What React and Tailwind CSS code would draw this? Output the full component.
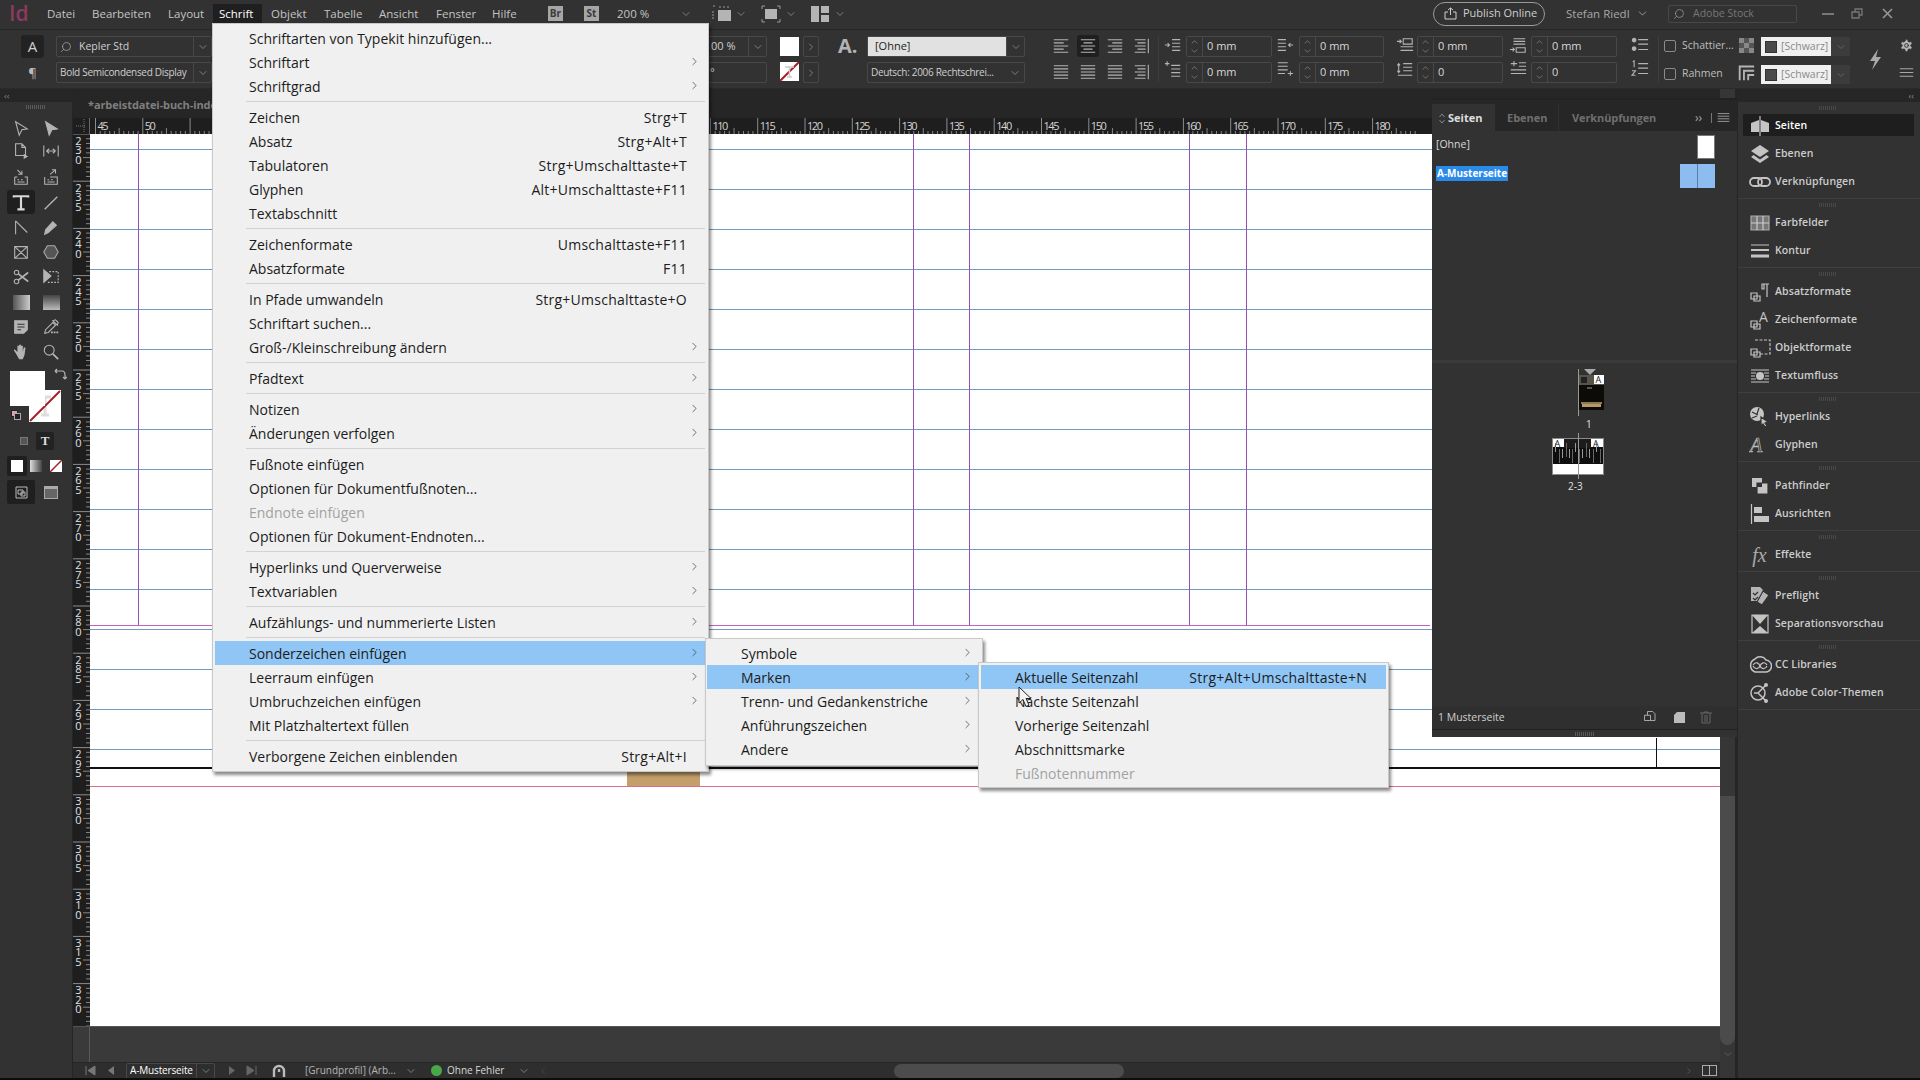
import { ChevronRight, ChevronDown, ChevronUp, ChevronLeft, Search, Settings } from 'lucide-react'

const MENU_BAR = [
  { t: 'Datei', w: 'w-[45px]' },
  { t: 'Bearbeiten', w: 'w-[76px]' },
  { t: 'Layout', w: 'w-[51px]' },
  { t: 'Schrift', w: 'w-[52px]', active: true },
  { t: 'Objekt', w: 'w-[53px]' },
  { t: 'Tabelle', w: 'w-[55px]' },
  { t: 'Ansicht', w: 'w-[57px]' },
  { t: 'Fenster', w: 'w-[56px]' },
  { t: 'Hilfe', w: 'w-[56px]' },
]

const SCHRIFT = [
  [{ t: 'Schriftarten von Typekit hinzufügen...' }, { t: 'Schriftart', sub: true }, { t: 'Schriftgrad', sub: true }],
  [
    { t: 'Zeichen', k: 'Strg+T' },
    { t: 'Absatz', k: 'Strg+Alt+T' },
    { t: 'Tabulatoren', k: 'Strg+Umschalttaste+T' },
    { t: 'Glyphen', k: 'Alt+Umschalttaste+F11' },
    { t: 'Textabschnitt' },
  ],
  [{ t: 'Zeichenformate', k: 'Umschalttaste+F11' }, { t: 'Absatzformate', k: 'F11' }],
  [
    { t: 'In Pfade umwandeln', k: 'Strg+Umschalttaste+O' },
    { t: 'Schriftart suchen...' },
    { t: 'Groß-/Kleinschreibung ändern', sub: true },
  ],
  [{ t: 'Pfadtext', sub: true }],
  [{ t: 'Notizen', sub: true }, { t: 'Änderungen verfolgen', sub: true }],
  [
    { t: 'Fußnote einfügen' },
    { t: 'Optionen für Dokumentfußnoten...' },
    { t: 'Endnote einfügen', off: true },
    { t: 'Optionen für Dokument-Endnoten...' },
  ],
  [{ t: 'Hyperlinks und Querverweise', sub: true }, { t: 'Textvariablen', sub: true }],
  [{ t: 'Aufzählungs- und nummerierte Listen', sub: true }],
  [
    { t: 'Sonderzeichen einfügen', sub: true, on: true },
    { t: 'Leerraum einfügen', sub: true },
    { t: 'Umbruchzeichen einfügen', sub: true },
    { t: 'Mit Platzhaltertext füllen' },
  ],
  [{ t: 'Verborgene Zeichen einblenden', k: 'Strg+Alt+I' }],
]

const SONDER = [
  { t: 'Symbole', sub: true },
  { t: 'Marken', sub: true, on: true },
  { t: 'Trenn- und Gedankenstriche', sub: true },
  { t: 'Anführungszeichen', sub: true },
  { t: 'Andere', sub: true },
]

const MARKEN = [
  { t: 'Aktuelle Seitenzahl', k: 'Strg+Alt+Umschalttaste+N', on: true },
  { t: 'Nächste Seitenzahl' },
  { t: 'Vorherige Seitenzahl' },
  { t: 'Abschnittsmarke' },
  { t: 'Fußnotennummer', off: true },
]

function MenuRow({ item, pl, pr, arrow }) {
  return (
    <div className={`relative h-[24px] flex items-center justify-between whitespace-nowrap ${pl} ${pr} ${item.on ? 'bg-[#90c6f5]' : ''} ${item.off ? 'text-[#a2a2a2]' : 'text-[#1c1c1c]'}`}>
      <span>{item.t}</span>
      {item.k && <span className="tracking-[0.25px]">{item.k}</span>}
      {item.sub && <ChevronRight size={13} strokeWidth={1.25} className={`absolute top-[5px] text-[#333] ${arrow}`} />}
    </div>
  )
}

function Sep() {
  return <div className="ml-[33px] mr-[3px] my-[3px] h-px bg-[#d2d2d2]" />
}

function Field({ className = '', children }) {
  return <div className={`h-[21px] border border-[#484848] rounded-[2px] flex items-center ${className}`}>{children}</div>
}

function DropBox({ className = '' }) {
  return (
    <div className={`h-full w-[18px] shrink-0 border-l border-[#484848] flex items-center justify-center text-[#aaa] ${className}`}>
      <ChevronDown size={12} strokeWidth={1.25} />
    </div>
  )
}

function StepField({ text, w = 'w-[86px]' }) {
  return (
    <Field className={w}>
      <div className="w-[16px] shrink-0 h-full border-r border-[#484848] flex flex-col items-center justify-center text-[#aaa]">
        <ChevronUp size={11} strokeWidth={1.25} className="-mb-[1px]" />
        <ChevronDown size={11} strokeWidth={1.25} />
      </div>
      <span className="pl-[4px] text-[11px] text-[#d8d8d8]">{text}</span>
    </Field>
  )
}

function G({ s = 18, children, className = '', vb = '0 0 20 20' }) {
  return (
    <svg width={s} height={s} viewBox={vb} fill="none" stroke="#b4b4b4" strokeWidth="1.2" className={`shrink-0 ${className}`}>
      {children}
    </svg>
  )
}

const Lines = ({ d }) => <path d={d} />

function AlignIcon({ kind }) {
  const rows = {
    left: 'M2 3h16M2 6.5h11M2 10h16M2 13.5h11M2 17h16',
    center: 'M2 3h16M5 6.5h10M2 10h16M5 13.5h10M2 17h16',
    right: 'M2 3h16M7 6.5h11M2 10h16M7 13.5h11M2 17h16',
    full: 'M2 3h16M2 6.5h16M2 10h16M2 13.5h16M2 17h16',
    spine: 'M2 3h12M5 6.5h9M2 10h12M5 13.5h9M2 17h12M17 2v16',
  }
  return <G><Lines d={rows[kind]} /></G>
}

function ControlBar() {
  return (
    <div className="h-[60px] shrink-0 pt-[6px] flex border-t border-[#262626] border-b border-b-[#2a2a2a] bg-[#323232] text-[11px] text-[#cfcfcf]">
      <div className="ml-[21px] w-[23px] flex flex-col gap-[5px] items-center">
        <div className="w-[23px] h-[23px] -mt-[1px] rounded-[3px] bg-[#222] flex items-center justify-center text-[15px] text-[#cfcfcf]">A</div>
        <div className="text-[13px] leading-[20px] text-[#bbb]">¶</div>
      </div>
      <div className="ml-[12px] w-[156px] flex flex-col gap-[5px]">
        <Field>
          <Search size={12} strokeWidth={1.25} className="ml-[3px] mr-[7px] text-[#bbb] -scale-x-100" />
          <span className="text-[10.5px] flex-1">Kepler Std</span>
          <DropBox />
        </Field>
        <Field>
          <span className="pl-[3px] text-[10px] flex-1 whitespace-nowrap tracking-[-0.3px]">Bold Semicondensed Display</span>
          <DropBox />
        </Field>
      </div>
      <div className="ml-[478px] w-[77px] flex flex-col gap-[5px]">
        <Field>
          <span className="pl-[20px] flex-1">00 %</span>
          <DropBox />
        </Field>
        <Field><span className="pl-[19px]">°</span></Field>
      </div>
      <div className="ml-[13px] w-[19px] flex flex-col gap-[6px] pt-[1px]">
        <div className="h-[19px] bg-white" />
        <svg width="19" height="19" viewBox="0 0 19 19" className="bg-white">
          <path d="M0 19 19 0" stroke="#a3202a" strokeWidth="2" />
          <path d="M5 5h9M9.500 5v10M7 15h5" stroke="#ccc" strokeWidth="1.500" fill="none" />
        </svg>
      </div>
      <div className="ml-[4px] w-[16px] flex flex-col gap-[5px]">
        {[0, 1].map((i) => (
          <div key={i} className="h-[21px] border border-[#484848] rounded-[2px] flex items-center justify-center text-[#aaa]">
            <ChevronRight size={12} strokeWidth={1.25} />
          </div>
        ))}
      </div>
      <div className="ml-[19px] w-[20px] text-[20px] leading-[20px] font-bold text-[#b4b4b4] whitespace-nowrap">A.</div>
      <div className="ml-[9px] w-[158px] flex flex-col gap-[5px]">
        <Field>
          <div className="flex-1 h-full bg-[#e1e1e1] text-[#222] pl-[7px] flex items-center">[Ohne]</div>
          <DropBox />
        </Field>
        <Field>
          <span className="pl-[3px] flex-1 whitespace-nowrap text-[10px] tracking-[-0.3px]">Deutsch: 2006 Rechtschrei...</span>
          <DropBox className="border-l-0" />
        </Field>
      </div>
      <div className="ml-[22px] w-[108px] grid grid-cols-4 grid-rows-2 gap-y-[6px] justify-items-center items-center h-[46px]">
        <AlignIcon kind="left" />
        <div className="w-[22px] h-[22px] rounded-[3px] bg-[#1f1f1f] flex items-center justify-center"><AlignIcon kind="center" /></div>
        <AlignIcon kind="right" />
        <AlignIcon kind="spine" />
        <AlignIcon kind="full" />
        <AlignIcon kind="full" />
        <AlignIcon kind="full" />
        <AlignIcon kind="spine" />
      </div>
      <div className="ml-[3px] w-px h-[46px] bg-[#3d3d3d]" />
      <div className="ml-[5px] w-[18px] flex flex-col gap-[6px]">
        <G><Lines d="M9 4h9M9 8h9M9 12h9M9 16h9M1 10h5M4 8l2 2-2 2" /></G>
        <G><Lines d="M8 6h10M8 10h10M8 14h10M8 18h10M1 4h5M3.500 1.500v5" /></G>
      </div>
      <div className="ml-[4px] flex flex-col gap-[5px]">
        <StepField text="0 mm" />
        <StepField text="0 mm" />
      </div>
      <div className="ml-[4px] w-[19px] flex flex-col gap-[6px]">
        <G><Lines d="M2 4h9M2 8h9M2 12h9M2 16h9M19 10h-5M16 8l-2 2 2 2" /></G>
        <G><Lines d="M2 3h11M2 7h11M2 11h11M2 15h8M13 15h6M16 12.500v5" /></G>
      </div>
      <div className="ml-[4px] flex flex-col gap-[5px]">
        <StepField text="0 mm" w="w-[85px]" />
        <StepField text="0 mm" w="w-[85px]" />
      </div>
      <div className="ml-[12px] w-[18px] flex flex-col gap-[6px]">
        <G><Lines d="M8 3h10v6H8zM5 12h14M5 16h14M1 6h5M4 4l2 2-2 2" /></G>
        <G><Lines d="M3 4v10M1.500 6 3 4l1.500 2M1.500 12 3 14l1.500-2M8 4h10M8 8h10M8 12h10M2 17h16" /></G>
      </div>
      <div className="ml-[3px] flex flex-col gap-[5px]">
        <StepField text="0 mm" />
        <StepField text="0" />
      </div>
      <div className="ml-[6px] w-[19px] flex flex-col gap-[6px]">
        <G><Lines d="M5 3h13M5 6h13M5 9h13M8 13h10v5H8zM1 15h5M4 13l2 2-2 2" /></G>
        <G><Lines d="M2 4h7M5.500 1v6M11 3h8M11 7h8M2 11h17M2 15h17" /></G>
      </div>
      <div className="ml-[3px] flex flex-col gap-[5px]">
        <StepField text="0 mm" />
        <StepField text="0" />
      </div>
      <div className="ml-[14px] w-[18px] flex flex-col gap-[6px]">
        <G><Lines d="M8 4h11M8 9h11M8 15h11" /><circle cx="3.500" cy="4.500" r="2" fill="#b4b4b4" /><circle cx="3.500" cy="14" r="2" fill="#b4b4b4" /></G>
        <G><Lines d="M8 4h11M8 9h11M8 15h11M2 2l1.500-1v7M1 12h4l-4 5h4" /></G>
      </div>
      <div className="ml-[9px] w-px h-[46px] bg-[#3d3d3d]" />
      <div className="ml-[5px] w-[12px] flex flex-col gap-[16px] pt-[4px]">
        <div className="w-[12px] h-[12px] border border-[#8a8a8a] rounded-[2px]" />
        <div className="w-[12px] h-[12px] border border-[#8a8a8a] rounded-[2px]" />
      </div>
      <div className="ml-[6px] w-[56px] flex flex-col gap-[12px] pt-[1px] text-[10.5px] text-[#bdbdbd] whitespace-nowrap">
        <span className="leading-[16px]">Schattier...</span>
        <span className="leading-[16px]">Rahmen</span>
      </div>
      <div className="w-[17px] flex flex-col gap-[10px] pt-[1px]">
        <svg width="17" height="17" viewBox="0 0 17 17">
          <path d="M1 1h15v15H1z" fill="#888" />
          <path d="M6 1h5v5H6zM1 6h5v5H1zM11 6h5v5h-5zM6 11h5v5H6z" fill="#555" />
        </svg>
        <G s={17}><path d="M2 19V3h17M7 19V8h12M12 19v-6h7" strokeWidth="2.200" /></G>
      </div>
      <div className="ml-[6px] w-[89px] flex flex-col gap-[9px] pt-[1px]">
        {[0, 1].map((i) => (
          <div key={i} className="h-[19px] flex">
            <div className="w-[70px] bg-[#f0f0f0] flex items-center pl-[4px] gap-[4px] text-[10.5px] text-[#8a8a8a] whitespace-nowrap">
              <span className="w-[12px] h-[12px] bg-[#4a4a4a] border border-[#333]" />
              [Schwarz]
            </div>
            <div className="flex-1 bg-[#3c3c3c] flex items-center justify-center text-[#777]"><ChevronDown size={12} strokeWidth={1.25} /></div>
          </div>
        ))}
      </div>
      <div className="ml-[17px] w-[18px] pt-[12px]">
        <svg width="18" height="24" viewBox="0 0 18 24"><path d="M11 1 3 13h5l-3 9 9-13H9z" fill="#aaa" /></svg>
      </div>
      <div className="ml-[13px] w-[16px] flex flex-col items-center gap-[12px] pt-[2px] text-[#b4b4b4]">
        <Settings size={15} fill="#b4b4b4" stroke="#323232" strokeWidth={1.5} />
        <G s={15}><Lines d="M1 5h18M1 10h18M1 15h18" /></G>
      </div>
    </div>
  )
}

function MenuBar() {
  return (
    <div className="h-[29px] shrink-0 pb-[2px] flex items-center bg-[#323232] text-[11.5px] text-[#c4c4c4] whitespace-nowrap">
      <div className="ml-[9px] w-[38px] text-[21px] leading-none font-semibold text-[#8c3a60]">Id</div>
      {MENU_BAR.map((m) => (
        <div key={m.t} className={m.w}>
          {m.active ? (
            <div className="-ml-[6px] w-[49px] h-[20px] pl-[6px] bg-[#1f1f1f] text-white flex items-center">{m.t}</div>
          ) : m.t}
        </div>
      ))}
      <div className="w-[15px] h-[15px] bg-[#a6a6a6] text-[#3a3a3a] text-[10px] font-bold flex items-center justify-center">Br</div>
      <div className="ml-[21px] w-[15px] h-[15px] bg-[#a6a6a6] text-[#3a3a3a] text-[10px] font-bold flex items-center justify-center">St</div>
      <div className="ml-[18px] w-[63px]">200 %</div>
      <ChevronDown size={12} strokeWidth={1.25} className="text-[#aaa]" />
      {/* layout icons right of the open menu */}
      <div className="ml-[20px] w-[20px]">
        <svg width="20" height="17" viewBox="0 0 20 17">
          <path d="M6 5h13v11H6z" fill="#b4b4b4" />
          <path d="M1 6v9M8 1v3M12 1v3M16 1v3M1 1h3" stroke="#999" strokeDasharray="2 1" />
        </svg>
      </div>
      <ChevronDown size={12} strokeWidth={1.25} className="ml-[3px] text-[#aaa]" />
      <div className="ml-[14px] w-[20px]">
        <svg width="20" height="18" viewBox="0 0 20 18">
          <path d="M4 4h12v10H4z" fill="#b4b4b4" />
          <path d="M1 4V1h3M16 1h3v3M19 14v3h-3M4 17H1v-3" stroke="#999" fill="none" />
        </svg>
      </div>
      <ChevronDown size={12} strokeWidth={1.25} className="ml-[4px] text-[#aaa]" />
      <div className="ml-[14px] w-[18px]">
        <svg width="18" height="16" viewBox="0 0 18 16">
          <path d="M0 0h8v16H0zM10 0h8v7h-8zM10 9h8v7h-8z" fill="#b4b4b4" />
        </svg>
      </div>
      <ChevronDown size={12} strokeWidth={1.25} className="ml-[5px] text-[#aaa]" />
      <div className="ml-[587px] w-[112px] h-[24px] rounded-full border border-[#9a9a9a] flex items-center pl-[10px] gap-[6px] text-[11px] text-[#cfcfcf]">
        <svg width="13" height="13" viewBox="0 0 13 13" fill="none" stroke="#cfcfcf" className="shrink-0">
          <path d="M4 5H1v7h11V5H9M6.500 8V1M4 3l2.500-2L9 3" />
        </svg>
        Publish Online
      </div>
      <div className="ml-[21px] w-[70px] text-[#a8a8a8] text-[11.5px]">Stefan Riedl</div>
      <ChevronDown size={13} strokeWidth={1.5} className="text-[#aaa]" />
      <div className="ml-[19px] w-[129px] h-[18px] border border-[#484848] rounded-[2px] flex items-center pl-[4px] gap-[8px] text-[10.5px] text-[#777]">
        <Search size={12} strokeWidth={1.25} className="text-[#aaa] -scale-x-100" />
        Adobe Stock
      </div>
      <div className="ml-[25px] w-[12px] h-[2px] bg-[#777]" />
      <div className="ml-[17px] w-[12px]">
        <svg width="12" height="11" viewBox="0 0 12 11" fill="none" stroke="#777" strokeWidth="1.300"><path d="M1 4h7v6H1zM4 4V1h7v6H8" /></svg>
      </div>
      <div className="ml-[19px] w-[12px]">
        <svg width="11" height="11" viewBox="0 0 11 11" stroke="#999" strokeWidth="1.500"><path d="M1 1l9 9M10 1l-9 9" /></svg>
      </div>
    </div>
  )
}

const TOOL_ROWS = [
  [<G><path d="M4 3 17 11l-6 1-3 6z" /></G>, <G><path d="M4 3 17 11l-6 1-3 6z" fill="#b4b4b4" /></G>],
  [<G><path d="M4 2h7l4 4v9H4zM11 2v4h4" /><path d="M13 13l5 3-5 3z" fill="#b4b4b4" stroke="none" /></G>, <G><path d="M2 4v12M18 4v12M5 10h10M5 10l3-2.500M5 10l3 2.500M15 10l-3-2.500M15 10l-3 2.500" /></G>],
  [<G><path d="M3 10v8h14v-8h-3M6 10H3M6 13h2M10 13h2M6 15.500h8M6 2l5 5M11 3v4H7" /></G>, <G><path d="M3 10v8h14v-8H9M6 13h2M10 13h2M6 15.500h8M9 7l6-5M11 2h4v4" /></G>],
  [<svg width="18" height="18" viewBox="0 0 20 20" fill="none" stroke="#d8d8d8" strokeWidth="2.400"><path d="M2 4V2.500h16V4M10 2.500V17M6 17h8" /></svg>, <G><path d="M3 17 17 3" strokeWidth="1.500" /></G>],
  [<G><path d="M4 2v15M4 2l13 13" /></G>, <G><path d="M3 17l1-5 8-9 4 4-9 8z" fill="#b4b4b4" /></G>],
  [<G><path d="M3 4h14v13H3zM3 4l14 13M17 4 3 17" /></G>, <G><path d="M6 3h8l4 7-4 7H6l-4-7z" fill="#555" stroke="#aaa" /></G>],
  [<G><circle cx="5" cy="5" r="2.500" /><circle cx="5" cy="15" r="2.500" /><path d="M7 6.500 18 15M7 13.500 18 5" strokeWidth="1.800" /></G>, <G><path d="M2 2l8 7-8 7z" fill="#b4b4b4" /><path d="M8 4h10v12H5" strokeDasharray="2 1.500" /></G>],
  [<svg width="17" height="15" viewBox="0 0 17 15"><defs><linearGradient id="gt"><stop stopColor="#555" /><stop offset="1" stopColor="#ccc" /></linearGradient></defs><rect width="17" height="15" fill="url(#gt)" /></svg>, <svg width="17" height="15" viewBox="0 0 17 15"><defs><linearGradient id="gf" x2="0" y2="1"><stop stopColor="#444" /><stop offset="1" stopColor="#bbb" /></linearGradient></defs><rect width="17" height="15" fill="url(#gf)" /></svg>],
  [<G><path d="M3 3h14v10l-4 4H3z" fill="#b4b4b4" /><path d="M6 7h8M6 10h8M6 13h4" stroke="#323232" /></G>, <G><path d="M3 17l1-4 8-8 3 3-8 8zM12 3l3-1 3 3-1 3z" /><path d="M10 16h8" strokeWidth="2" strokeDasharray="2 1" /></G>],
  [<G><path d="M4 11 2 8l1-1 3 3V3h2v6V2h2v7-6h2v7l1-5h2l-1 8-2 5H8z" fill="#b4b4b4" stroke="none" /></G>, <G><circle cx="8" cy="8" r="5.500" /><path d="M12 12l6 6" strokeWidth="2" /></G>],
]
const TOOL_HEIGHTS = 'grid-rows-[22px_24px_27px_26px_24px_24px_26px_24px_26px_24px]'

function Toolbar() {
  return (
    <div className="w-[73px] shrink-0 flex flex-col bg-[#323232] border-r border-[#252525]">
      <div className="h-[13px] bg-[#262626] pl-[4px] text-[#8a8a8a] text-[9px] leading-[13px]">‹‹</div>
      <div className="h-[15px] flex justify-center pt-[3px]"><div className="w-[20px] h-[4px] bg-[repeating-linear-gradient(90deg,#5a5a5a_0_1px,transparent_1px_2px)]" /></div>
      <div className={`grid grid-cols-[30px_30px] ${TOOL_HEIGHTS} pl-[6px]`}>
        {TOOL_ROWS.flat().map((ic, i) => (
          <div key={i} className="flex items-center justify-center relative">
            {i === 6 && <div className="absolute left-[1px] top-0 w-[28px] h-[24px] rounded-[3px] bg-[#1f1f1f]" />}
            <div className="relative">{ic}</div>
          </div>
        ))}
      </div>
      {/* fill and stroke */}
      <div className="relative h-[66px] shrink-0">
        <div className="absolute left-[29px] top-[26px] w-[32px] h-[32px]">
          <svg width="32" height="32" viewBox="0 0 32 32" className="bg-white">
            <path d="M10 7h12M16 7v18M12 25h8" stroke="#ddd" strokeWidth="3" fill="none" />
            <path d="M1 31 31 1" stroke="#a3202a" strokeWidth="2" />
          </svg>
        </div>
        <div className="absolute left-[10px] top-[7px] w-[35px] h-[35px] bg-white" />
        <svg width="13" height="13" viewBox="0 0 13 13" fill="none" stroke="#b4b4b4" strokeWidth="1.200" className="absolute left-[54px] top-[4px]"><path d="M1 3h7q3 0 3 4v4M1 3l2-2M1 3l2 2M9 9l2 2 2-2" /></svg>
        <div className="absolute left-[11px] top-[46px] w-[7px] h-[7px] bg-[#d9a0b8] border border-[#222]" />
        <div className="absolute left-[14px] top-[49px] w-[7px] h-[7px] bg-[#222] border border-[#aaa]" />
      </div>
      <div className="h-[22px] flex items-center">
        <div className="ml-[20px] w-[8px] h-[8px] bg-[#555] border border-[#777]" />
        <div className="ml-[8px] w-[18px] h-[18px] bg-[#222] rounded-[2px] flex items-center justify-center font-['Liberation_Serif',serif] font-bold text-[13px] text-[#ddd]">T</div>
      </div>
      <div className="h-[28px] flex items-center">
        <div className="ml-[7px] w-[20px] h-[20px] rounded-[2px] bg-[#1f1f1f] flex items-center justify-center"><div className="w-[12px] h-[12px] bg-white" /></div>
        <div className="ml-[3px] w-[12px] h-[12px] bg-[linear-gradient(90deg,#ddd,#444)]" />
        <svg width="12" height="12" viewBox="0 0 12 12" className="ml-[8px] bg-white"><path d="M0 12 12 0" stroke="#a3202a" strokeWidth="1.500" /></svg>
      </div>
      <div className="h-[24px] flex items-center">
        <div className="ml-[7px] w-[28px] h-[24px] rounded-[2px] bg-[#1f1f1f] flex items-center justify-center">
          <svg width="13" height="13" viewBox="0 0 13 13" fill="none" stroke="#bbb"><path d="M1 1h11v11H1zM3 4h5v4H3zM6 6h4v4H6z" /></svg>
        </div>
        <div className="ml-[9px] w-[14px] h-[13px] bg-[#666] border border-[#aaa] border-t-[3px]" />
      </div>
    </div>
  )
}

const hTicks = [45, 50, 55, 60, 65, 70, 75, 80, 85, 90, 95, 100, 105, 110, 115, 120, 125, 130, 135, 140, 145, 150, 155, 160, 165, 170, 175, 180]
const vTicks = [230, 235, 240, 245, 250, 255, 260, 265, 270, 275, 280, 285, 290, 295, 300, 305, 310, 315, 320, 325]
const hx = (n) => 95.5 + 47.3 * (n - 45) / 5
const vy = (n) => 134 + 47.2 * (n - 230) / 5

function HRuler() {
  return (
    <svg width="1647" height="16" viewBox="73 118 1647 16" className="block bg-[#1e1e1e] shrink-0">
      <path d="M76 126h9M84 119v14" stroke="#777" strokeDasharray="1 1" />
      <path d="M89.500 118v16" stroke="#666" />
      {hTicks.map((n) => (
        <g key={n}>
          <path d={`M${hx(n)} 118v16`} stroke="#a8a8a8" strokeWidth="0.800" />
          {[1, 2, 3, 4, 5, 6, 7, 8, 9].map((i) => (
            <path key={i} d={`M${hx(n) + i * 4.73} ${i === 5 ? 128 : 131}V134`} stroke="#a0a0a0" strokeWidth="0.800" />
          ))}
          {(hx(n) < 190 || hx(n) > 705) && (
            <text x={hx(n) + 2} y="130" fontSize="11" fill="#d4d4d4" fontFamily="Open Sans, sans-serif" textLength={n > 95 ? 16 : 11}>{n}</text>
          )}
        </g>
      ))}
    </svg>
  )
}

function VRuler() {
  return (
    <svg width="17" height="892" viewBox="73 134 17 892" className="block bg-[#1e1e1e] shrink-0">
      {vTicks.map((n) => (
        <g key={n}>
          <path d={`M73 ${vy(n)}h17`} stroke="#a8a8a8" strokeWidth="0.800" />
          {[1, 2, 3, 4, 5, 6, 7, 8, 9].map((i) => (
            <path key={i} d={`M${i === 5 ? 83 : 86} ${vy(n) + i * 4.72}H90`} stroke="#a0a0a0" strokeWidth="0.800" />
          ))}
          {n < 325 && String(n).split('').map((d, i) => (
            <text key={i} x="78.500" y={vy(n) + [10.500, 20, 29.500][i]} fontSize="11" textAnchor="middle" fill="#e0e0e0" fontFamily="Open Sans, sans-serif">{d}</text>
          ))}
        </g>
      ))}
    </svg>
  )
}

const GUIDES = [149, 189, 229, 269, 309, 349, 389, 429, 469, 509, 549, 589, 629, 669, 709, 749]
const COLS = [138, 913, 969, 1189, 1246]

function Page() {
  return (
    <div className="flex-1 bg-white">
      <svg width="1630" height="892" viewBox="90 134 1630 892" className="block">
        {GUIDES.map((y) => <path key={y} d={`M90 ${y}.5H1720`} stroke="#7399c2" />)}
        {COLS.map((x) => <path key={x} d={`M${x}.5 134V625`} stroke="#9250b5" />)}
        <path d="M90 625.500H1430" stroke="#c860c4" />
        <path d="M90 768H1720" stroke="#111" strokeWidth="2" />
        <path d="M1656.500 738V768" stroke="#111" />
        <path d="M90 786.500H1720" stroke="#d86f8b" />
        <rect x="627" y="771" width="73" height="15" fill="#c49f6b" />
      </svg>
    </div>
  )
}

function StatusBar() {
  const chev = <ChevronDown size={12} strokeWidth={1.25} className="shrink-0 text-[#aaa]" />
  return (
    <div className="h-[16px] shrink-0 flex items-center bg-[#2e2e2e] text-[10px] text-[#cfcfcf] whitespace-nowrap border-t border-[#262626]">
      <svg width="12" height="11" viewBox="0 0 12 11" className="ml-[11px] shrink-0"><path d="M2 1v9M11 1 4 5.500 11 10z" stroke="#777" fill="#777" /></svg>
      <svg width="12" height="11" viewBox="0 0 12 11" className="ml-[9px] shrink-0"><path d="M9 1 3 5.500 9 10z" fill="#777" /></svg>
      <div className="ml-[9px] w-[89px] h-[16px] border border-[#484848] rounded-[2px] flex items-center">
        <span className="w-[71px] pl-[3px] text-white tracking-[-0.15px]">A-Musterseite</span>
        <DropBox />
      </div>
      <svg width="12" height="11" viewBox="0 0 12 11" className="ml-[11px] shrink-0"><path d="M3 1l6 4.500L3 10z" fill="#666" /></svg>
      <svg width="12" height="11" viewBox="0 0 12 11" className="ml-[8px] shrink-0"><path d="M10 1v9M1 1l7 4.500L1 10z" stroke="#666" fill="#666" /></svg>
      <svg width="16" height="14" viewBox="0 0 16 14" fill="none" stroke="#bbb" strokeWidth="2.400" className="ml-[14px] shrink-0"><path d="M2 13V7a5 5 0 0 1 10 0v6M7 5v3" /></svg>
      <span className="ml-[17px] w-[100px] text-[#b4b4b4]">[Grundprofil] (Arb...</span>
      {chev}
      <div className="ml-[14px] w-[11px] h-[11px] rounded-full bg-[#4aa84a] shrink-0" />
      <span className="ml-[5px] w-[70px] text-[#d8d8d8]">Ohne Fehler</span>
      <span className="ml-px">{chev}</span>
      <ChevronLeft size={10} strokeWidth={1} className="ml-[8px] text-[#666] shrink-0" />
      <div className="ml-[346px] w-[230px] h-[14px] rounded-full bg-[#4c4c4c] shrink-0" />
      <ChevronRight size={10} strokeWidth={1} className="ml-[560px] text-[#888] shrink-0" />
      <div className="ml-[8px] w-[15px] h-[11px] border border-[#aaa] flex justify-center shrink-0"><div className="w-px h-full bg-[#aaa]" /></div>
    </div>
  )
}

function Center() {
  return (
    <div className="w-[1647px] shrink-0 flex flex-col">
      <div className="h-[29px] shrink-0 bg-[#262626] pl-[15px] pt-[8px] text-[11px] leading-[16px] font-bold text-[#7f7f7f] whitespace-nowrap tracking-[-0.1px]">*arbeistdatei-buch-inde</div>
      <HRuler />
      <div className="h-[892px] shrink-0 flex">
        <VRuler />
        <Page />
      </div>
      <div className="flex-1 bg-[#3a3a3a] border-t border-[#555]">
        <div className="ml-[16px] w-px h-full bg-[#5a5a5a]" />
      </div>
      <StatusBar />
    </div>
  )
}

const DI = {
  seiten: <G s={22} vb="0 0 22 22"><path d="M10 5 2 8v9h8zM12 5l8 3v9h-8z" fill="#c4c4c4" stroke="none" /><path d="M11 1v20" stroke="#c4c4c4" /></G>,
  ebenen: <G s={22} vb="0 0 22 22"><path d="M11 2 20 8l-9 6-9-6z" fill="#c4c4c4" stroke="none" /><path d="M4.500 12 2 14l9 6 9-6-2.500-2-6.500 4.500z" fill="#c4c4c4" stroke="none" /></G>,
  links: <G s={22} vb="0 0 22 22"><rect x="1" y="7" width="12" height="8" rx="4" strokeWidth="1.800" stroke="#c4c4c4" /><rect x="9" y="7" width="12" height="8" rx="4" strokeWidth="1.800" stroke="#c4c4c4" /></G>,
  farb: <G s={20} vb="0 0 20 16"><path d="M1 1h18v14H1z" fill="#777" stroke="#aaa" /><path d="M1 8h18M7 1v14M13 1v14" stroke="#ccc" /></G>,
  kontur: <G s={20} vb="0 0 20 16"><path d="M1 2h18" stroke="#c4c4c4" strokeWidth="1" /><path d="M1 7h18" stroke="#c4c4c4" strokeWidth="2" /><path d="M1 13h18" stroke="#c4c4c4" strokeWidth="3" /></G>,
  absatz: <G s={22} vb="0 0 22 22"><path d="M2 12h6v6H2zM5 15h6v5H5zM14 3h6M18 3v13M15 3v5h-2V3z" stroke="#c4c4c4" /></G>,
  zeichen: (
    <G s={22} vb="0 0 22 22">
      <path d="M2 12h6v6H2zM5 15h6v5H5z" stroke="#c4c4c4" />
      <text x="10" y="13" fontSize="14" fill="#c4c4c4" stroke="none" fontFamily="Open Sans, sans-serif">A</text>
    </G>
  ),
  objekt: <G s={22} vb="0 0 22 22"><path d="M6 3h15v14H11" stroke="#c4c4c4" strokeDasharray="3 1.500" /><path d="M2 12h6v6H2zM5 15h6v5H5z" stroke="#c4c4c4" /></G>,
  textfl: <G s={20} vb="0 0 20 16"><path d="M1 2h18M1 5h5M14 5h5M1 8h4M15 8h4M1 11h5M14 11h5M1 14h18" stroke="#c4c4c4" /><circle cx="10" cy="8" r="4" fill="#c4c4c4" stroke="none" /></G>,
  hyper: <G s={22} vb="0 0 22 22"><circle cx="8" cy="8" r="7" fill="#c4c4c4" stroke="none" /><path d="M3 6l6 3M10 2 8 8M3 12l5-2" stroke="#323232" /><path d="M12 11l7 5-3 1 2 3-2 1-2-3-2 2z" fill="#c4c4c4" stroke="#323232" /></G>,
  glyph: (
    <G s={22} vb="0 0 22 22">
      <text x="1" y="18" fontSize="20" fontStyle="italic" fill="none" stroke="#bdbdbd" strokeWidth="0.700" fontFamily="Liberation Serif, serif">A</text>
    </G>
  ),
  path: <G s={20} vb="0 0 20 20"><path d="M2 2h10v9H2z" fill="#c4c4c4" stroke="none" /><path d="M7 7h11v11H7z" fill="#c4c4c4" stroke="#323232" /><path d="M7 7h5v4H7z" fill="#323232" stroke="none" /></G>,
  ausr: <G s={20} vb="0 0 20 20"><path d="M1.500 0v20" stroke="#c4c4c4" /><path d="M4 3h8v6H4zM4 12h15v6H4z" fill="#c4c4c4" stroke="none" /></G>,
  fx: <span className="font-['Liberation_Serif',serif] italic text-[20px] leading-none text-[#aaa]">fx</span>,
  pre: <G s={22} vb="0 0 22 22"><path d="M2 2h9l3 3v11H2z" fill="#b4b4b4" stroke="none" /><path d="M4 8l2 2 3-3M4 13l2 2 3-3" stroke="#323232" /><path d="M14 6l6 4-7 10-5-3z" fill="#b4b4b4" stroke="#323232" /></G>,
  sep: <G s={20} vb="0 0 20 20"><path d="M2 1h16v18H2z" stroke="#c4c4c4" /><path d="M2 1h16L10 10zM2 19h16l-8-7z" fill="#c4c4c4" stroke="none" /></G>,
  cc: <G s={24} vb="0 0 24 18"><path d="M7 3a7 7 0 0 0 0 13h10a6 6 0 0 0 1-12 7 7 0 0 0-11-1z" stroke="#c4c4c4" strokeWidth="1.500" /><path d="M5 9c3-4 6-2 7 1s5 4 7 0M5 10c2 4 6 3 7 0s5-5 7-1" stroke="#c4c4c4" /></G>,
  color: <G s={22} vb="0 0 22 22"><circle cx="9" cy="11" r="7" stroke="#c4c4c4" strokeWidth="1.500" /><path d="M9 11 17 3M9 11l8 8M9 11h-4" stroke="#c4c4c4" strokeWidth="1.500" /><circle cx="17" cy="3" r="2" fill="#c4c4c4" stroke="none" /><circle cx="17" cy="19" r="2" fill="#c4c4c4" stroke="none" /></G>,
}

const DOCK = [
  [['Seiten', 'seiten', true], ['Ebenen', 'ebenen'], ['Verknüpfungen', 'links']],
  [['Farbfelder', 'farb'], ['Kontur', 'kontur']],
  [['Absatzformate', 'absatz'], ['Zeichenformate', 'zeichen'], ['Objektformate', 'objekt'], ['Textumfluss', 'textfl']],
  [['Hyperlinks', 'hyper'], ['Glyphen', 'glyph']],
  [['Pathfinder', 'path'], ['Ausrichten', 'ausr']],
  [['Effekte', 'fx']],
  [['Preflight', 'pre'], ['Separationsvorschau', 'sep']],
  [['CC Libraries', 'cc'], ['Adobe Color-Themen', 'color']],
]

function Dock() {
  return (
    <div className="w-[182px] shrink-0 flex flex-col bg-[#323232]">
      <div className="h-[13px] shrink-0 bg-[#262626] text-right pr-[6px] text-[#8a8a8a] text-[9px] leading-[13px]">‹‹</div>
      {DOCK.map((sec, i) => (
        <div key={i} className="relative pt-[10px] pb-[2px] border-b border-[#3f3f3f]">
          <div className="absolute left-[81px] top-[4px] w-[18px] h-[4px] bg-[repeating-linear-gradient(90deg,#484848_0_1px,transparent_1px_2px)]" />
          {sec.map(([name, ic, active]) => (
            <div key={name} className="relative h-[28px] flex items-center whitespace-nowrap">
              {active && <div className="absolute left-[5px] right-[6px] top-[2px] bottom-[4px] bg-[#1e1e1e]" />}
              <div className="relative w-[37px] pl-[6px] h-[24px] flex items-center justify-center shrink-0">{DI[ic]}</div>
              <span className={`relative text-[10.5px] font-semibold tracking-[0.1px] ${active ? 'text-white' : 'text-[#cdcdcd]'}`}>{name}</span>
            </div>
          ))}
        </div>
      ))}
    </div>
  )
}

function Thumbs() {
  const bars = [2, 6, 9, 13, 16, 19, 22, 26, 29, 33, 36, 40, 43, 47]
  return (
    <div className="relative h-[128px]">
      {/* page 1 */}
      <div className="absolute left-[146px] top-[0px] w-px h-[47px] bg-[#999]" />
      <svg width="12" height="6" viewBox="0 0 12 6" className="absolute left-[152px] top-0"><path d="M0 0h12L6 6z" fill="#aaa" /></svg>
      <svg width="25" height="35" viewBox="0 0 25 35" className="absolute left-[147px] top-[6px] bg-[#0d0b08]">
        <rect width="25" height="10" fill="#57534a" />
        <rect x="15" width="10" height="9" fill="#fff" />
        <text x="16.500" y="8" fontSize="9" fill="#222" fontFamily="Open Sans, sans-serif">A</text>
        <rect x="2" y="2" width="6" height="6" fill="#222" />
        <rect x="8" y="12" width="5" height="2" fill="#555" />
        <rect x="2" y="27" width="21" height="2" fill="#8d7a52" />
        <rect x="3" y="29" width="19" height="3" fill="#b79a67" />
      </svg>
      <div className="absolute left-[154px] top-[48px] text-[10px] leading-[14px] text-[#e0e0e0]">1</div>
      {/* spread 2-3 */}
      <div className="absolute left-[146px] top-[64px] w-px h-[46px] bg-[#999] z-10" />
      <svg width="50" height="35" viewBox="0 0 50 35" className="absolute left-[121px] top-[70px] bg-white outline outline-[#8a8a8a]">
        <rect y="8" width="50" height="17" fill="#0e0e0e" />
        <rect x="11" width="27" height="9" fill="#1c1c1c" />
        {bars.map((x, i) => <rect key={x} x={x} y={i % 3 ? 10 : 4} width="1" height={i % 2 ? 14 : 9} fill={i % 2 ? '#666' : '#999'} />)}
        <text x="1.500" y="8" fontSize="9" fill="#222" fontFamily="Open Sans, sans-serif">A</text>
        <text x="40" y="8" fontSize="9" fill="#222" fontFamily="Open Sans, sans-serif">A</text>
      </svg>
      <div className="absolute left-[136px] top-[110px] text-[10px] leading-[14px] text-[#e0e0e0]">2-3</div>
    </div>
  )
}

function SeitenPanel() {
  return (
    <div className="absolute left-[1432px] top-[100px] w-[305px] h-[637px] flex flex-col bg-[#323232] shadow-[0_-2px_0_#222]">
      <div className="h-[31px] shrink-0 pt-[4px] flex bg-[#262626] text-[11px] font-bold whitespace-nowrap items-stretch">
        <div className="w-[63px] bg-[#323232] flex items-center pl-[7px] pt-px gap-[3px] text-[#dedede]">
          <svg width="6" height="11" viewBox="0 0 6 11" fill="none" stroke="#888"><path d="M0.500 4 3 1l2.500 3M0.500 7 3 10l2.500-3" /></svg>
          Seiten
        </div>
        <div className="w-[63px] pl-[12px] pt-px flex items-center text-[#6f6f6f]">Ebenen</div>
        <div className="w-[108px] pl-[13px] pt-px flex items-center text-[#6f6f6f] border-l border-[#303030] tracking-[-0.1px]">Verknüpfungen</div>
        <div className="flex-1 flex items-center pl-[29px] text-[#aaa] font-normal text-[12px]">››</div>
        <div className="flex items-center pr-[7px] gap-[5px]">
          <div className="w-px h-[10px] bg-[#777]" />
          <G s={13}><Lines d="M1 4h18M1 8h18M1 12h18M1 16h18" /></G>
        </div>
      </div>
      <div className="h-[232px] shrink-0 border-b-[3px] border-[#3a3a3a] text-[10.5px]">
        <div className="h-[27px] flex items-center pl-[4px] relative text-[#d8d8d8]">
          <span>[Ohne]</span>
          <div className="absolute left-[265px] top-[4px] w-[18px] h-[24px] bg-white border border-[#777]" />
        </div>
        <div className="h-[30px] flex items-center pl-[4px] relative">
          <span className="w-[72px] h-[15px] bg-[#2a8ae8] text-white text-[10px] font-bold flex items-center pl-px leading-none whitespace-nowrap">A-Musterseite</span>
          <div className="absolute left-[248px] top-[6px] w-[35px] h-[24px] bg-[#8dbdf0] flex justify-center"><div className="w-px h-full bg-[#5d7ea3]" /></div>
        </div>
      </div>
      <div className="flex-1 pt-[6px]">
        <Thumbs />
      </div>
      <div className="h-[23px] shrink-0 bg-[#2f2f2f] flex items-center pl-[6px] text-[10.5px] text-[#d0d0d0] whitespace-nowrap">
        <span className="w-[205px]">1 Musterseite</span>
        <G s={15}><Lines d="M2 7h8v7H2zM6 7V2h7l3 3v9h-6" /></G>
        <svg width="11" height="11" viewBox="0 0 11 11" className="ml-[16px]"><path d="M3 0h8v11H0V3z" fill="#bbb" /></svg>
        <svg width="12" height="13" viewBox="0 0 12 13" fill="none" stroke="#666" className="ml-[15px]"><path d="M0 2h12M4 2V1h4v1M2 2v10h8V2M5 4v7M7 4v7" /></svg>
      </div>
      <div className="h-[8px] shrink-0 border-t border-[#1f1f1f] flex justify-center pt-[2px]">
        <div className="w-[20px] h-[4px] bg-[repeating-linear-gradient(90deg,#585858_0_1px,transparent_1px_2px)]" />
      </div>
    </div>
  )
}

function Menus() {
  const box = "absolute bg-[#f0f0f0] border border-[#c8c8c8] shadow-[2px_3px_3px_rgba(0,0,0,0.45)] font-['Open_Sans',sans-serif] text-[14px]"
  return (
    <>
      <div className={`${box} left-[212px] top-[23px] w-[497px] pt-[2px] pb-[3px]`}>
        {SCHRIFT.map((group, i) => (
          <div key={i}>
            {i > 0 && <Sep />}
            {group.map((it) => (
              <div key={it.t} className="mx-[2px]">
                <MenuRow item={it} pl="pl-[34px]" pr="pr-[19px]" arrow="right-[5px]" />
              </div>
            ))}
          </div>
        ))}
      </div>
      <div className={`${box} left-[705px] top-[638px] w-[278px] pt-[2px] pb-[4px]`}>
        {SONDER.map((it) => (
          <div key={it.t} className="ml-[1px]">
            <MenuRow item={it} pl="pl-[34px]" pr="pr-[6px]" arrow="right-[8px]" />
          </div>
        ))}
      </div>
      <div className={`${box} left-[978px] top-[662px] w-[411px] pt-[2px] pb-[2px]`}>
        {MARKEN.map((it) => (
          <div key={it.t} className="mx-[2px]">
            <MenuRow item={it} pl="pl-[34px]" pr="pr-[19px]" arrow="right-[8px]" />
          </div>
        ))}
      </div>
      {/* mouse pointer */}
      <svg width="14" height="22" viewBox="0 0 14 22" className="absolute left-[1018px] top-[686px]">
        <path d="M1 1v16l4-3.500 3 7 3-1.300-3-6.700h5z" fill="#f4f4f4" stroke="#222" />
      </svg>
    </>
  )
}

export default function App() {
  return (
    <div className="relative w-[1920px] h-[1080px] overflow-hidden flex flex-col bg-[#323232] font-['Open_Sans',sans-serif]">
      <MenuBar />
      <ControlBar />
      <div className="flex-1 flex min-h-0">
        <Toolbar />
        <Center />
        <div className="w-[15px] shrink-0 flex flex-col bg-[#363636]">
          <div className="h-[707px] shrink-0" />
          <div className="h-[249px] shrink-0 bg-[#4b4b4b] rounded-b-[8px]" />
          <div className="flex-1 flex flex-col items-center pt-[3px] text-[#777]">
            <ChevronDown size={12} strokeWidth={1.25} />
          </div>
        </div>
        <div className="w-[3px] shrink-0 bg-[#252525]" />
        <Dock />
      </div>
      <div className="h-[2px] shrink-0 bg-[#0c0c0c]" />
      <SeitenPanel />
      <Menus />
    </div>
  )
}
